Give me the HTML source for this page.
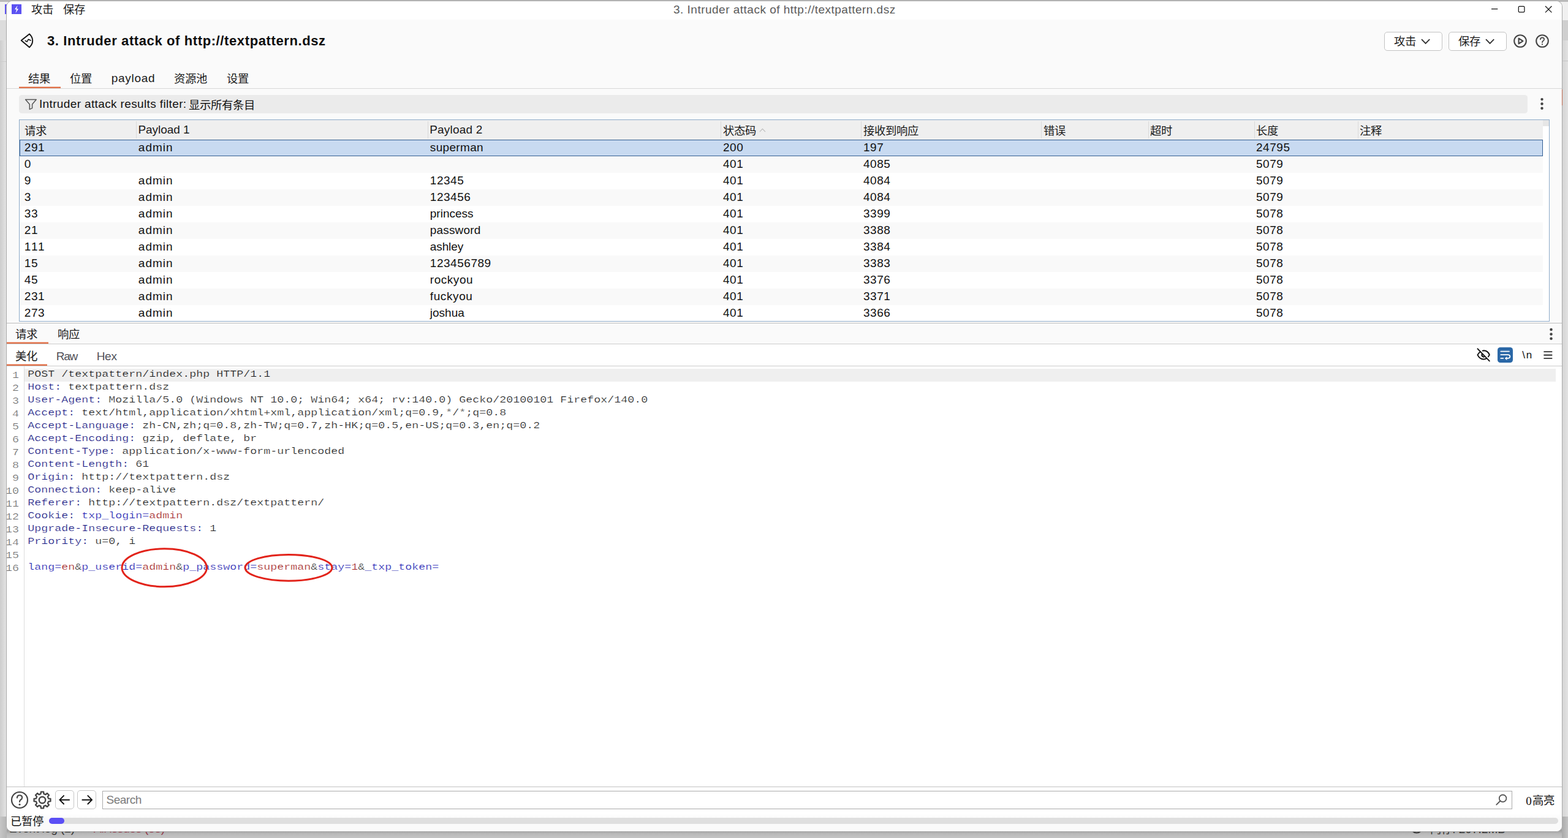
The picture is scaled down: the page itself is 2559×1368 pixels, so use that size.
<!DOCTYPE html>
<html><head><meta charset="utf-8"><title>Intruder attack</title>
<style>
html,body{margin:0;padding:0}
body{width:2559px;height:1368px;position:relative;overflow:hidden;background:#e9e9e9;font-family:"Liberation Sans",sans-serif;font-kerning:none;}
.a{position:absolute;box-sizing:border-box;overflow:visible}
.t{position:absolute;white-space:pre;line-height:24px;height:24px;font-kerning:none;font-variant-ligatures:none}
.m{font-family:"Liberation Mono",monospace;font-size:18.333px;transform:scaleY(0.82);transform-origin:0 16.89px;-webkit-text-stroke:0.3px #fff}.m.h{-webkit-text-stroke-color:#efefef}.u{-webkit-text-stroke:0}
.cj{font-family:"Liberation Sans","Noto Sans CJK SC",sans-serif;font-size:1000px;font-kerning:none}
#win{position:absolute;left:10px;top:1px;width:2540px;height:1357px;box-sizing:border-box;border:1px solid #a9a9a9;border-radius:10px;overflow:hidden;background:#fafafa}
#in{position:absolute;left:-11px;top:-2px;width:2559px;height:1368px}
</style></head><body>

<div class="a" style="left:0;top:0;width:2559px;height:1368px;background:#e6e6e6"></div>
<div class="a" style="left:0;top:0;width:14px;height:1368px;background:linear-gradient(90deg,#cdcdcd,#ececec)"></div>
<div class="a" style="left:0;top:0;width:14px;height:33px;background:#f1f1f1"></div>
<div class="a" style="left:0;top:33px;width:14px;height:33px;background:#dcdcdc"></div>
<div class="a" style="left:8px;top:7px;width:4px;height:16px;background:#5c52f0"></div>
<div class="a" style="left:2545px;top:0;width:14px;height:1368px;background:linear-gradient(90deg,#b8b8b8,#d6d6d6 40%,#e2e2e2)"></div>
<div class="a" style="left:2545px;top:0;width:14px;height:33px;background:#f0f0f0"></div>
<div class="a" style="left:2545px;top:33px;width:14px;height:33px;background:#cfcfcf"></div>
<div class="a" style="left:2545px;top:99px;width:14px;height:1px;background:#c4c4c4"></div>
<div class="a" style="left:0;top:100px;width:14px;height:1px;background:#cccccc"></div>
<div class="a" style="left:0;top:0;width:2559px;height:3px;background:#b9b9b9"></div>
<div class="a" style="left:0;top:1333px;width:2559px;height:35px;background:#c2c2c2"></div>
<div class="a" style="left:0;top:1333px;width:14px;height:1px;background:#a8a8a8"></div>
<div class="a" style="left:2545px;top:1333px;width:14px;height:1px;background:#a8a8a8"></div>
<div class="a" style="left:0;top:1354px;width:2559px;height:14px;background:linear-gradient(#9c9c9c 0,#a4a4a4 3px,#b9b9b9 7px,#c2c2c2 12px)"></div>
<div class="a" style="left:0;top:1333px;width:11px;height:35px;background:linear-gradient(90deg,#c6c6c6,#b4b4b4)"></div>
<div class="a" style="left:2549px;top:1333px;width:10px;height:35px;background:linear-gradient(90deg,#a9a9a9,#c4c4c4)"></div>
<div class="t" style="left:15.04px;top:1341.42px;font-size:19px;color:#333;font-family:'Liberation Sans',sans-serif;letter-spacing:-0.049px;">Event log (2)</div><div class="t" style="left:152.96px;top:1341.42px;font-size:19px;color:#93394a;font-family:'Liberation Sans',sans-serif;letter-spacing:-0.221px;">All issues (33)</div><svg class="a" style="left:2300px;top:1337.5px;" width="24" height="24" viewBox="0 0 24 24"><circle cx="12" cy="12" r="9.6" fill="none" stroke="#333" stroke-width="2"/></svg><svg class="a" role="img" aria-label="内存" style="left:2333.61px;top:1343.97px" width="36.40" height="18.4" viewBox="0 0 1978 1000" fill="#333"><text class="cj" x="0" y="880" textLength="1978" lengthAdjust="spacing">内存</text></svg><div class="t" style="left:2370.27px;top:1341.62px;font-size:19px;color:#333;font-family:'Liberation Sans',sans-serif;letter-spacing:0.017px;">: 297.2MB</div>
<div id="win"><div id="in">
<div class="a" style="left:11px;top:2px;width:2538px;height:30px;background:#ffffff;"></div><svg class="a" style="left:19px;top:7px;" width="16" height="16" viewBox="0 0 16 16"><rect width="16" height="16" fill="#5c52f2"/><path d="M9.7 1.7 L5.0 8.3 L8.0 8.6 L6.4 14.4 L11.1 7.6 L8.0 7.3 Z" fill="#fff"/></svg><svg class="a" role="img" aria-label="攻击" style="left:51.11px;top:6.27px" width="36.40" height="18.4" viewBox="0 0 1978 1000" fill="#1a1a1a"><text class="cj" x="0" y="880" textLength="1978" lengthAdjust="spacing">攻击</text></svg><svg class="a" role="img" aria-label="保存" style="left:103.31px;top:6.27px" width="36.40" height="18.4" viewBox="0 0 1978 1000" fill="#1a1a1a"><text class="cj" x="0" y="880" textLength="1978" lengthAdjust="spacing">保存</text></svg><svg class="a" style="left:1097.28px;top:-0.25px" width="370.2" height="30.4"><text x="2" y="21.85" textLength="362.17" lengthAdjust="spacing" style="font-family:'Liberation Sans',sans-serif;font-size:19px;fill:#5b5b5b;font-kerning:none">3. Intruder attack of http://textpattern.dsz</text></svg><svg class="a" style="left:2428px;top:4px;" width="112" height="24" viewBox="0 0 112 24"><g fill="none" stroke="#111" stroke-width="1.25"><path d="M6 10.6h10.3"/><rect x="50.3" y="6.3" width="9.6" height="9.6" rx="1.6"/><path d="M94 6l10.4 10.4M104.4 6L94 16.4"/></g></svg><svg class="a" style="left:32px;top:53px;" width="24" height="27" viewBox="0 0 24 27"><g fill="none" stroke="#111" stroke-width="1.9" stroke-linejoin="round" stroke-linecap="round"><path d="M2.7 13.1 L16.0 2.5 Q21.3 7.4 21.2 13.6 Q21.1 19.6 16.0 24.2 Z"/><path d="M9.2 13.5 L12.1 15.1 L14.3 11.2 L18.2 13.0" stroke-width="1.5"/></g></svg><svg class="a" style="left:74.90px;top:48.50px" width="462.1" height="35.2"><text x="2" y="25.30" textLength="454.10" lengthAdjust="spacing" style="font-family:'Liberation Sans',sans-serif;font-size:22px;font-weight:bold;fill:#0d0d0d;font-kerning:none">3. Intruder attack of http://textpattern.dsz</text></svg><div class="a" style="left:2259px;top:52px;width:95px;height:30.5px;background:#fff;border:1px solid #c3c3c3;border-radius:5px;"></div><div class="a" style="left:2364px;top:52px;width:95px;height:30.5px;background:#fff;border:1px solid #c3c3c3;border-radius:5px;"></div><svg class="a" role="img" aria-label="攻击" style="left:2274.61px;top:57.57px" width="36.40" height="18.4" viewBox="0 0 1978 1000" fill="#1a1a1a"><text class="cj" x="0" y="880" textLength="1978" lengthAdjust="spacing">攻击</text></svg><svg class="a" role="img" aria-label="保存" style="left:2379.61px;top:57.57px" width="36.40" height="18.4" viewBox="0 0 1978 1000" fill="#1a1a1a"><text class="cj" x="0" y="880" textLength="1978" lengthAdjust="spacing">保存</text></svg><svg class="a" style="left:2319.3px;top:63px;" width="16" height="10" viewBox="0 0 16 10"><path d="M1 1.2 L7.6 7.8 L14.2 1.2" fill="none" stroke="#333" stroke-width="1.9"/></svg><svg class="a" style="left:2424.2px;top:63px;" width="16" height="10" viewBox="0 0 16 10"><path d="M1 1.2 L7.6 7.8 L14.2 1.2" fill="none" stroke="#333" stroke-width="1.9"/></svg><svg class="a" style="left:2469px;top:55px;" width="24" height="24" viewBox="0 0 24 24"><g fill="none" stroke="#444" stroke-width="2.1" stroke-linejoin="round"><circle cx="12" cy="12" r="9.8"/><path d="M9.6 7.6 L16.4 12 L9.6 16.4 Z"/></g></svg><svg class="a" style="left:2504.7px;top:55px;" width="24" height="24" viewBox="0 0 24 24"><g fill="none" stroke="#444" stroke-width="2.1" stroke-linecap="round"><circle cx="12" cy="12" r="9.8"/><path d="M8.9 9.4 Q9 6.3 12 6.3 Q15.1 6.3 15.1 9 Q15.1 10.8 13.4 11.7 Q12 12.5 12 14.2" stroke-width="1.7"/></g><circle cx="12" cy="17.3" r="1.15" fill="#444"/></svg><svg class="a" role="img" aria-label="结果" style="left:45.61px;top:119.27px" width="36.40" height="18.4" viewBox="0 0 1978 1000" fill="#1a1a1a"><text class="cj" x="0" y="880" textLength="1978" lengthAdjust="spacing">结果</text></svg><svg class="a" role="img" aria-label="位置" style="left:114.01px;top:119.27px" width="36.40" height="18.4" viewBox="0 0 1978 1000" fill="#1a1a1a"><text class="cj" x="0" y="880" textLength="1978" lengthAdjust="spacing">位置</text></svg><div class="t" style="left:181.68px;top:116.12px;font-size:19px;color:#1a1a1a;font-family:'Liberation Sans',sans-serif;letter-spacing:0.732px;">payload</div><svg class="a" role="img" aria-label="资源池" style="left:284.31px;top:119.27px" width="54.40" height="18.4" viewBox="0 0 2957 1000" fill="#1a1a1a"><text class="cj" x="0" y="880" textLength="2957" lengthAdjust="spacing">资源池</text></svg><svg class="a" role="img" aria-label="设置" style="left:370.11px;top:119.27px" width="36.40" height="18.4" viewBox="0 0 1978 1000" fill="#1a1a1a"><text class="cj" x="0" y="880" textLength="1978" lengthAdjust="spacing">设置</text></svg><div class="a" style="left:11px;top:144px;width:2538px;height:1px;background:#d7d7d7;"></div><div class="a" style="left:31px;top:141px;width:68px;height:1px;background:#f2c9b9;"></div><div class="a" style="left:31px;top:142px;width:68px;height:2px;background:#e07048;"></div><div class="a" style="left:31px;top:155px;width:2462px;height:30px;background:#ebebeb;border-radius:4.5px;"></div><svg class="a" style="left:40px;top:160px;" width="21" height="20" viewBox="0 0 21 20"><path d="M1.6 2.4 H19.2 L12.6 10.3 V16.6 L8.3 18.4 V10.3 Z" fill="none" stroke="#555" stroke-width="1.5" stroke-linejoin="round"/></svg><div class="t" style="left:63.95px;top:158.32px;font-size:19px;color:#111;font-family:'Liberation Sans',sans-serif;letter-spacing:0.368px;">Intruder attack results filter:</div><svg class="a" role="img" aria-label="显示所有条目" style="left:308.21px;top:161.77px" width="108.40" height="18.4" viewBox="0 0 5891 1000" fill="#111"><text class="cj" x="0" y="880" textLength="5891" lengthAdjust="spacing">显示所有条目</text></svg><svg class="a" style="left:2510px;top:155px;" width="14" height="30" viewBox="0 0 14 30"><g fill="#444"><circle cx="6.5" cy="7.1" r="2.2"/><circle cx="6.5" cy="14.5" r="2.2"/><circle cx="6.5" cy="21.8" r="2.2"/></g></svg><div class="a" style="left:31px;top:195px;width:2498px;height:330px;background:#ffffff;border:1px solid #8eabc9;"></div><div class="a" style="left:32px;top:196px;width:2486px;height:31.5px;background:#efefef;"></div><div class="a" style="left:2518px;top:196px;width:10px;height:10px;background:#e6e6e6;"></div><div class="a" style="left:222px;top:198px;width:1px;height:28px;background:#dadada;"></div><div class="a" style="left:698px;top:198px;width:1px;height:28px;background:#dadada;"></div><div class="a" style="left:1176px;top:198px;width:1px;height:28px;background:#dadada;"></div><div class="a" style="left:1405px;top:198px;width:1px;height:28px;background:#dadada;"></div><div class="a" style="left:1699px;top:198px;width:1px;height:28px;background:#dadada;"></div><div class="a" style="left:1873.5px;top:198px;width:1px;height:28px;background:#dadada;"></div><div class="a" style="left:2046.5px;top:198px;width:1px;height:28px;background:#dadada;"></div><div class="a" style="left:2216px;top:198px;width:1px;height:28px;background:#dadada;"></div><svg class="a" role="img" aria-label="请求" style="left:39.61px;top:203.97px" width="36.40" height="18.4" viewBox="0 0 1978 1000" fill="#1a1a1a"><text class="cj" x="0" y="880" textLength="1978" lengthAdjust="spacing">请求</text></svg><div class="t" style="left:225.44px;top:200.12px;font-size:19px;color:#1a1a1a;font-family:'Liberation Sans',sans-serif;letter-spacing:-0.053px;">Payload 1</div><div class="t" style="left:701.14px;top:200.12px;font-size:19px;color:#1a1a1a;font-family:'Liberation Sans',sans-serif;letter-spacing:0.201px;">Payload 2</div><svg class="a" role="img" aria-label="状态码" style="left:1180.21px;top:203.97px" width="54.40" height="18.4" viewBox="0 0 2957 1000" fill="#1a1a1a"><text class="cj" x="0" y="880" textLength="2957" lengthAdjust="spacing">状态码</text></svg><svg class="a" style="left:1238.5px;top:208.5px;" width="11" height="8" viewBox="0 0 11 8"><path d="M0.8 6.2 L5.4 1.4 L10 6.2" fill="none" stroke="#bdbdbd" stroke-width="1.2"/></svg><svg class="a" role="img" aria-label="接收到响应" style="left:1409.11px;top:203.97px" width="90.40" height="18.4" viewBox="0 0 4913 1000" fill="#1a1a1a"><text class="cj" x="0" y="880" textLength="4913" lengthAdjust="spacing">接收到响应</text></svg><svg class="a" role="img" aria-label="错误" style="left:1703.01px;top:203.97px" width="36.40" height="18.4" viewBox="0 0 1978 1000" fill="#1a1a1a"><text class="cj" x="0" y="880" textLength="1978" lengthAdjust="spacing">错误</text></svg><svg class="a" role="img" aria-label="超时" style="left:1876.81px;top:203.97px" width="36.40" height="18.4" viewBox="0 0 1978 1000" fill="#1a1a1a"><text class="cj" x="0" y="880" textLength="1978" lengthAdjust="spacing">超时</text></svg><svg class="a" role="img" aria-label="长度" style="left:2049.61px;top:203.97px" width="36.40" height="18.4" viewBox="0 0 1978 1000" fill="#1a1a1a"><text class="cj" x="0" y="880" textLength="1978" lengthAdjust="spacing">长度</text></svg><svg class="a" role="img" aria-label="注释" style="left:2219.21px;top:203.97px" width="36.40" height="18.4" viewBox="0 0 1978 1000" fill="#1a1a1a"><text class="cj" x="0" y="880" textLength="1978" lengthAdjust="spacing">注释</text></svg><div class="a" style="left:32px;top:228px;width:2486px;height:27px;background:#c8daf1;border:1px solid #345f93;"></div><div class="t" style="left:39.80px;top:229.02px;font-size:19px;color:#111;font-family:'Liberation Sans',sans-serif;letter-spacing:0.530px;">291</div><div class="t" style="left:225.80px;top:229.02px;font-size:19px;color:#111;font-family:'Liberation Sans',sans-serif;letter-spacing:1.021px;">admin</div><div class="t" style="left:701.80px;top:229.02px;font-size:19px;color:#111;font-family:'Liberation Sans',sans-serif;letter-spacing:0.335px;">superman</div><div class="t" style="left:1180.00px;top:229.02px;font-size:19px;color:#111;font-family:'Liberation Sans',sans-serif;letter-spacing:0.530px;">200</div><div class="t" style="left:1409.00px;top:229.02px;font-size:19px;color:#111;font-family:'Liberation Sans',sans-serif;letter-spacing:0.530px;">197</div><div class="t" style="left:2050.00px;top:229.02px;font-size:19px;color:#111;font-family:'Liberation Sans',sans-serif;letter-spacing:0.530px;">24795</div><div class="a" style="left:32px;top:255px;width:2486px;height:27px;background:#f9f9f9;"></div><div class="t" style="left:39.80px;top:256.02px;font-size:19px;color:#111;font-family:'Liberation Sans',sans-serif;letter-spacing:0.530px;">0</div><div class="t" style="left:1180.00px;top:256.02px;font-size:19px;color:#111;font-family:'Liberation Sans',sans-serif;letter-spacing:0.530px;">401</div><div class="t" style="left:1409.00px;top:256.02px;font-size:19px;color:#111;font-family:'Liberation Sans',sans-serif;letter-spacing:0.530px;">4085</div><div class="t" style="left:2050.00px;top:256.02px;font-size:19px;color:#111;font-family:'Liberation Sans',sans-serif;letter-spacing:0.530px;">5079</div><div class="a" style="left:32px;top:282px;width:2486px;height:27px;background:#ffffff;"></div><div class="t" style="left:39.80px;top:283.02px;font-size:19px;color:#111;font-family:'Liberation Sans',sans-serif;letter-spacing:0.530px;">9</div><div class="t" style="left:225.80px;top:283.02px;font-size:19px;color:#111;font-family:'Liberation Sans',sans-serif;letter-spacing:1.021px;">admin</div><div class="t" style="left:701.80px;top:283.02px;font-size:19px;color:#111;font-family:'Liberation Sans',sans-serif;letter-spacing:0.530px;">12345</div><div class="t" style="left:1180.00px;top:283.02px;font-size:19px;color:#111;font-family:'Liberation Sans',sans-serif;letter-spacing:0.530px;">401</div><div class="t" style="left:1409.00px;top:283.02px;font-size:19px;color:#111;font-family:'Liberation Sans',sans-serif;letter-spacing:0.530px;">4084</div><div class="t" style="left:2050.00px;top:283.02px;font-size:19px;color:#111;font-family:'Liberation Sans',sans-serif;letter-spacing:0.530px;">5079</div><div class="a" style="left:32px;top:309px;width:2486px;height:27px;background:#f9f9f9;"></div><div class="t" style="left:39.80px;top:310.02px;font-size:19px;color:#111;font-family:'Liberation Sans',sans-serif;letter-spacing:0.530px;">3</div><div class="t" style="left:225.80px;top:310.02px;font-size:19px;color:#111;font-family:'Liberation Sans',sans-serif;letter-spacing:1.021px;">admin</div><div class="t" style="left:701.80px;top:310.02px;font-size:19px;color:#111;font-family:'Liberation Sans',sans-serif;letter-spacing:0.530px;">123456</div><div class="t" style="left:1180.00px;top:310.02px;font-size:19px;color:#111;font-family:'Liberation Sans',sans-serif;letter-spacing:0.530px;">401</div><div class="t" style="left:1409.00px;top:310.02px;font-size:19px;color:#111;font-family:'Liberation Sans',sans-serif;letter-spacing:0.530px;">4084</div><div class="t" style="left:2050.00px;top:310.02px;font-size:19px;color:#111;font-family:'Liberation Sans',sans-serif;letter-spacing:0.530px;">5079</div><div class="a" style="left:32px;top:336px;width:2486px;height:27px;background:#ffffff;"></div><div class="t" style="left:39.80px;top:337.02px;font-size:19px;color:#111;font-family:'Liberation Sans',sans-serif;letter-spacing:0.530px;">33</div><div class="t" style="left:225.80px;top:337.02px;font-size:19px;color:#111;font-family:'Liberation Sans',sans-serif;letter-spacing:1.021px;">admin</div><div class="t" style="left:701.80px;top:337.02px;font-size:19px;color:#111;font-family:'Liberation Sans',sans-serif;letter-spacing:0.005px;">princess</div><div class="t" style="left:1180.00px;top:337.02px;font-size:19px;color:#111;font-family:'Liberation Sans',sans-serif;letter-spacing:0.530px;">401</div><div class="t" style="left:1409.00px;top:337.02px;font-size:19px;color:#111;font-family:'Liberation Sans',sans-serif;letter-spacing:0.530px;">3399</div><div class="t" style="left:2050.00px;top:337.02px;font-size:19px;color:#111;font-family:'Liberation Sans',sans-serif;letter-spacing:0.530px;">5078</div><div class="a" style="left:32px;top:363px;width:2486px;height:27px;background:#f9f9f9;"></div><div class="t" style="left:39.80px;top:364.02px;font-size:19px;color:#111;font-family:'Liberation Sans',sans-serif;letter-spacing:0.530px;">21</div><div class="t" style="left:225.80px;top:364.02px;font-size:19px;color:#111;font-family:'Liberation Sans',sans-serif;letter-spacing:1.021px;">admin</div><div class="t" style="left:701.80px;top:364.02px;font-size:19px;color:#111;font-family:'Liberation Sans',sans-serif;letter-spacing:0.158px;">password</div><div class="t" style="left:1180.00px;top:364.02px;font-size:19px;color:#111;font-family:'Liberation Sans',sans-serif;letter-spacing:0.530px;">401</div><div class="t" style="left:1409.00px;top:364.02px;font-size:19px;color:#111;font-family:'Liberation Sans',sans-serif;letter-spacing:0.530px;">3388</div><div class="t" style="left:2050.00px;top:364.02px;font-size:19px;color:#111;font-family:'Liberation Sans',sans-serif;letter-spacing:0.530px;">5078</div><div class="a" style="left:32px;top:390px;width:2486px;height:27px;background:#ffffff;"></div><div class="t" style="left:39.80px;top:391.02px;font-size:19px;color:#111;font-family:'Liberation Sans',sans-serif;letter-spacing:0.530px;">111</div><div class="t" style="left:225.80px;top:391.02px;font-size:19px;color:#111;font-family:'Liberation Sans',sans-serif;letter-spacing:1.021px;">admin</div><div class="t" style="left:701.80px;top:391.02px;font-size:19px;color:#111;font-family:'Liberation Sans',sans-serif;letter-spacing:-0.117px;">ashley</div><div class="t" style="left:1180.00px;top:391.02px;font-size:19px;color:#111;font-family:'Liberation Sans',sans-serif;letter-spacing:0.530px;">401</div><div class="t" style="left:1409.00px;top:391.02px;font-size:19px;color:#111;font-family:'Liberation Sans',sans-serif;letter-spacing:0.530px;">3384</div><div class="t" style="left:2050.00px;top:391.02px;font-size:19px;color:#111;font-family:'Liberation Sans',sans-serif;letter-spacing:0.530px;">5078</div><div class="a" style="left:32px;top:417px;width:2486px;height:27px;background:#f9f9f9;"></div><div class="t" style="left:39.80px;top:418.02px;font-size:19px;color:#111;font-family:'Liberation Sans',sans-serif;letter-spacing:0.530px;">15</div><div class="t" style="left:225.80px;top:418.02px;font-size:19px;color:#111;font-family:'Liberation Sans',sans-serif;letter-spacing:1.021px;">admin</div><div class="t" style="left:701.80px;top:418.02px;font-size:19px;color:#111;font-family:'Liberation Sans',sans-serif;letter-spacing:0.530px;">123456789</div><div class="t" style="left:1180.00px;top:418.02px;font-size:19px;color:#111;font-family:'Liberation Sans',sans-serif;letter-spacing:0.530px;">401</div><div class="t" style="left:1409.00px;top:418.02px;font-size:19px;color:#111;font-family:'Liberation Sans',sans-serif;letter-spacing:0.530px;">3383</div><div class="t" style="left:2050.00px;top:418.02px;font-size:19px;color:#111;font-family:'Liberation Sans',sans-serif;letter-spacing:0.530px;">5078</div><div class="a" style="left:32px;top:444px;width:2486px;height:27px;background:#ffffff;"></div><div class="t" style="left:39.80px;top:445.02px;font-size:19px;color:#111;font-family:'Liberation Sans',sans-serif;letter-spacing:0.530px;">45</div><div class="t" style="left:225.80px;top:445.02px;font-size:19px;color:#111;font-family:'Liberation Sans',sans-serif;letter-spacing:1.021px;">admin</div><div class="t" style="left:701.80px;top:445.02px;font-size:19px;color:#111;font-family:'Liberation Sans',sans-serif;letter-spacing:0.539px;">rockyou</div><div class="t" style="left:1180.00px;top:445.02px;font-size:19px;color:#111;font-family:'Liberation Sans',sans-serif;letter-spacing:0.530px;">401</div><div class="t" style="left:1409.00px;top:445.02px;font-size:19px;color:#111;font-family:'Liberation Sans',sans-serif;letter-spacing:0.530px;">3376</div><div class="t" style="left:2050.00px;top:445.02px;font-size:19px;color:#111;font-family:'Liberation Sans',sans-serif;letter-spacing:0.530px;">5078</div><div class="a" style="left:32px;top:471px;width:2486px;height:27px;background:#f9f9f9;"></div><div class="t" style="left:39.80px;top:472.02px;font-size:19px;color:#111;font-family:'Liberation Sans',sans-serif;letter-spacing:0.530px;">231</div><div class="t" style="left:225.80px;top:472.02px;font-size:19px;color:#111;font-family:'Liberation Sans',sans-serif;letter-spacing:1.021px;">admin</div><div class="t" style="left:701.80px;top:472.02px;font-size:19px;color:#111;font-family:'Liberation Sans',sans-serif;letter-spacing:0.597px;">fuckyou</div><div class="t" style="left:1180.00px;top:472.02px;font-size:19px;color:#111;font-family:'Liberation Sans',sans-serif;letter-spacing:0.530px;">401</div><div class="t" style="left:1409.00px;top:472.02px;font-size:19px;color:#111;font-family:'Liberation Sans',sans-serif;letter-spacing:0.530px;">3371</div><div class="t" style="left:2050.00px;top:472.02px;font-size:19px;color:#111;font-family:'Liberation Sans',sans-serif;letter-spacing:0.530px;">5078</div><div class="a" style="left:32px;top:498px;width:2486px;height:26px;background:#ffffff;"></div><div class="t" style="left:39.80px;top:499.02px;font-size:19px;color:#111;font-family:'Liberation Sans',sans-serif;letter-spacing:0.530px;">273</div><div class="t" style="left:225.80px;top:499.02px;font-size:19px;color:#111;font-family:'Liberation Sans',sans-serif;letter-spacing:1.021px;">admin</div><div class="t" style="left:701.80px;top:499.02px;font-size:19px;color:#111;font-family:'Liberation Sans',sans-serif;">joshua</div><div class="t" style="left:1180.00px;top:499.02px;font-size:19px;color:#111;font-family:'Liberation Sans',sans-serif;letter-spacing:0.530px;">401</div><div class="t" style="left:1409.00px;top:499.02px;font-size:19px;color:#111;font-family:'Liberation Sans',sans-serif;letter-spacing:0.530px;">3366</div><div class="t" style="left:2050.00px;top:499.02px;font-size:19px;color:#111;font-family:'Liberation Sans',sans-serif;letter-spacing:0.530px;">5078</div><div class="a" style="left:11px;top:527px;width:2538px;height:1px;background:#bdbdbd;"></div><div class="a" style="left:11px;top:528px;width:2538px;height:33px;background:#fafafa;"></div><svg class="a" role="img" aria-label="请求" style="left:25.41px;top:536.47px" width="36.40" height="18.4" viewBox="0 0 1978 1000" fill="#1a1a1a"><text class="cj" x="0" y="880" textLength="1978" lengthAdjust="spacing">请求</text></svg><svg class="a" role="img" aria-label="响应" style="left:93.61px;top:536.47px" width="36.40" height="18.4" viewBox="0 0 1978 1000" fill="#1a1a1a"><text class="cj" x="0" y="880" textLength="1978" lengthAdjust="spacing">响应</text></svg><div class="a" style="left:11px;top:561px;width:2538px;height:1px;background:#cbcbcb;"></div><div class="a" style="left:11px;top:558px;width:67.8px;height:1px;background:#f2c3b1;"></div><div class="a" style="left:11px;top:559px;width:67.8px;height:2px;background:#e07048;"></div><svg class="a" style="left:2525px;top:530px;" width="14" height="30" viewBox="0 0 14 30"><g fill="#444"><circle cx="6.5" cy="8" r="2.25"/><circle cx="6.5" cy="15.5" r="2.25"/><circle cx="6.5" cy="22.8" r="2.25"/></g></svg><div class="a" style="left:11px;top:562px;width:2538px;height:35px;background:#ffffff;"></div><svg class="a" role="img" aria-label="美化" style="left:25.31px;top:571.97px" width="36.40" height="18.4" viewBox="0 0 1978 1000" fill="#1a1a1a"><text class="cj" x="0" y="880" textLength="1978" lengthAdjust="spacing">美化</text></svg><div class="t" style="left:91.84px;top:569.62px;font-size:19px;color:#4f5058;font-family:'Liberation Sans',sans-serif;letter-spacing:-1.249px;">Raw</div><div class="t" style="left:157.64px;top:569.62px;font-size:19px;color:#4f5058;font-family:'Liberation Sans',sans-serif;letter-spacing:-0.263px;">Hex</div><div class="a" style="left:11px;top:597px;width:2538px;height:1px;background:#cbcbcb;"></div><div class="a" style="left:11px;top:594px;width:65.8px;height:1px;background:#f2c3b1;"></div><div class="a" style="left:11px;top:595px;width:65.8px;height:2px;background:#e07048;"></div><svg class="a" style="left:2409px;top:566px;" width="25" height="26" viewBox="0 0 25 26"><g fill="none" stroke="#111" stroke-width="1.9" stroke-linecap="round"><path d="M6.4 8.8 Q3.4 10.8 2.5 13.4 Q5.6 20.4 12.4 20.5 Q14.9 20.4 16.9 19.1"/><path d="M10.5 6.6 Q11.6 6.3 12.6 6.3 Q19.3 6.6 21.8 13.2 Q21.1 15.0 19.8 16.3"/><path d="M9.6 12.0 Q8.6 15.9 12.7 16.6" stroke-width="2.2"/><path d="M2.5 3.3 L21.8 23.4"/></g></svg><svg class="a" style="left:2444px;top:567px;" width="25" height="25" viewBox="0 0 25 25"><rect width="25" height="25" rx="4.5" fill="#2b68a7"/><g fill="none" stroke="#fff" stroke-width="1.7" stroke-linecap="round"><path d="M5.3 6.6 H19"/><path d="M5.3 12.1 H16.8 Q20.4 12.2 20.4 15.0 Q20.4 17.8 16.8 17.9 H13.6"/><path d="M5.3 17.9 H9.3"/></g><path d="M15.4 14.9 L11.8 17.9 L15.4 20.9 Z" fill="#fff"/></svg><div class="t" style="left:2484.30px;top:567.81px;font-size:17px;color:#111;font-family:'Liberation Sans',sans-serif;letter-spacing:1.626px;">\n</div><svg class="a" style="left:2518px;top:570px;" width="18" height="20" viewBox="0 0 18 20"><path d="M1.4 4.3h13.9M1.4 9.6h13.9M1.4 15h13.9" stroke="#111" stroke-width="1.6" fill="none"/></svg><div class="a" style="left:11px;top:598px;width:2538px;height:686.5px;background:#ffffff;"></div><div class="a" style="left:39px;top:598px;width:1px;height:686.5px;background:#dcdcdc;"></div><div class="a" style="left:40px;top:602px;width:2499px;height:21px;background:#efefef;"></div><div class="t m h" style="left:45.3px;top:599.41px"><span style="color:#111">POST /textpattern/index.php HTTP/1.1</span></div><div class="t m" style="left:20.00px;top:600.56px;color:#6a6a6a">1</div><div class="t m" style="left:45.3px;top:620.41px"><span style="color:#141480">Host:</span><span style="color:#1a1a1a"> textpattern.dsz</span></div><div class="t m" style="left:20.00px;top:621.56px;color:#6a6a6a">2</div><div class="t m" style="left:45.3px;top:641.41px"><span style="color:#141480">User-Agent:</span><span style="color:#1a1a1a"> Mozilla/5.0 (Windows NT 10.0; Win64; x64; rv:140.0) Gecko/20100101 Firefox/140.0</span></div><div class="t m" style="left:20.00px;top:642.56px;color:#6a6a6a">3</div><div class="t m" style="left:45.3px;top:662.41px"><span style="color:#141480">Accept:</span><span style="color:#1a1a1a"> text/html,application/xhtml+xml,application/xml;q=0.9,*/*;q=0.8</span></div><div class="t m" style="left:20.00px;top:663.56px;color:#6a6a6a">4</div><div class="t m" style="left:45.3px;top:683.41px"><span style="color:#141480">Accept-Language:</span><span style="color:#1a1a1a"> zh-CN,zh;q=0.8,zh-TW;q=0.7,zh-HK;q=0.5,en-US;q=0.3,en;q=0.2</span></div><div class="t m" style="left:20.00px;top:684.56px;color:#6a6a6a">5</div><div class="t m" style="left:45.3px;top:704.41px"><span style="color:#141480">Accept-Encoding:</span><span style="color:#1a1a1a"> gzip, deflate, br</span></div><div class="t m" style="left:20.00px;top:705.56px;color:#6a6a6a">6</div><div class="t m" style="left:45.3px;top:725.41px"><span style="color:#141480">Content-Type:</span><span style="color:#1a1a1a"> application/x-www-form-urlencoded</span></div><div class="t m" style="left:20.00px;top:726.56px;color:#6a6a6a">7</div><div class="t m" style="left:45.3px;top:746.41px"><span style="color:#141480">Content-Length:</span><span style="color:#1a1a1a"> 61</span></div><div class="t m" style="left:20.00px;top:747.56px;color:#6a6a6a">8</div><div class="t m" style="left:45.3px;top:767.41px"><span style="color:#141480">Origin:</span><span style="color:#1a1a1a"> http://textpattern.dsz</span></div><div class="t m" style="left:20.00px;top:768.56px;color:#6a6a6a">9</div><div class="t m" style="left:45.3px;top:788.41px"><span style="color:#141480">Connection:</span><span style="color:#1a1a1a"> keep-alive</span></div><div class="t m" style="left:9.00px;top:789.56px;color:#6a6a6a">10</div><div class="t m" style="left:45.3px;top:809.41px"><span style="color:#141480">Referer:</span><span style="color:#1a1a1a"> http://textpattern.dsz/textpattern/</span></div><div class="t m" style="left:9.00px;top:810.56px;color:#6a6a6a">11</div><div class="t m" style="left:45.3px;top:830.41px"><span style="color:#141480">Cookie:</span><span style="color:#1a1ab0"> txp<span class="u">_</span>login=</span><span style="color:#a02020">admin</span></div><div class="t m" style="left:9.00px;top:831.56px;color:#6a6a6a">12</div><div class="t m" style="left:45.3px;top:851.41px"><span style="color:#141480">Upgrade-Insecure-Requests:</span><span style="color:#1a1a1a"> 1</span></div><div class="t m" style="left:9.00px;top:852.56px;color:#6a6a6a">13</div><div class="t m" style="left:45.3px;top:872.41px"><span style="color:#141480">Priority:</span><span style="color:#1a1a1a"> u=0, i</span></div><div class="t m" style="left:9.00px;top:873.56px;color:#6a6a6a">14</div><div class="t m" style="left:9.00px;top:894.56px;color:#6a6a6a">15</div><div class="t m" style="left:45.3px;top:914.41px"><span style="color:#1a1ab0">lang=</span><span style="color:#a02020">en</span><span style="color:#333">&amp;</span><span style="color:#1a1ab0">p<span class="u">_</span>userid=</span><span style="color:#a02020">admin</span><span style="color:#333">&amp;</span><span style="color:#1a1ab0">p<span class="u">_</span>password=</span><span style="color:#a02020">superman</span><span style="color:#333">&amp;</span><span style="color:#1a1ab0">stay=</span><span style="color:#a02020">1</span><span style="color:#333">&amp;</span><span style="color:#1a1ab0"><span class="u">_</span>txp<span class="u">_</span>token=</span></div><div class="t m" style="left:9.00px;top:915.56px;color:#6a6a6a">16</div><svg class="a" style="left:190px;top:885px;" width="370" height="85" viewBox="0 0 370 85"><g fill="none" stroke="#e2231a" stroke-width="3"><ellipse cx="78.2" cy="41.8" rx="69.2" ry="31"/><ellipse cx="281" cy="41.8" rx="70.9" ry="21.4"/></g></svg><div class="a" style="left:11px;top:1284.3px;width:2538px;height:1px;background:#c2c2c2;"></div><div class="a" style="left:11px;top:1285.3px;width:2538px;height:73px;background:linear-gradient(#fff 0,#fff 42px,#fafafa 52px);"></div><svg class="a" style="left:16px;top:1290px;" width="32" height="32" viewBox="0 0 32 32"><g fill="none" stroke="#454545" stroke-width="2.2" stroke-linecap="round"><circle cx="16" cy="16" r="13"/><path d="M11.9 12.4 Q12 8.3 16 8.3 Q20.1 8.3 20.1 11.9 Q20.1 14.2 17.9 15.5 Q16 16.6 16 19" stroke-width="2.1"/></g><circle cx="16" cy="23.2" r="1.5" fill="#454545"/></svg><svg class="a" style="left:53px;top:1290px;" width="32" height="32" viewBox="0 0 32 32"><g fill="none" stroke="#454545" stroke-width="2.3" stroke-linejoin="round"><path d="M13.87 2.57 L18.13 2.57 L18.43 5.89 L21.43 7.13 L23.99 5.00 L27.00 8.01 L24.87 10.57 L26.11 13.57 L29.43 13.87 L29.43 18.13 L26.11 18.43 L24.87 21.43 L27.00 23.99 L23.99 27.00 L21.43 24.87 L18.43 26.11 L18.13 29.43 L13.87 29.43 L13.57 26.11 L10.57 24.87 L8.01 27.00 L5.00 23.99 L7.13 21.43 L5.89 18.43 L2.57 18.13 L2.57 13.87 L5.89 13.57 L7.13 10.57 L5.00 8.01 L8.01 5.00 L10.57 7.13 L13.57 5.89Z"/><circle cx="16" cy="16" r="5.2" stroke-width="2.4"/></g></svg><div class="a" style="left:90.2px;top:1290.3px;width:30.4px;height:30.4px;background:#fff;border:1px solid #c6c6c6;border-radius:5px;"></div><div class="a" style="left:126.2px;top:1290.3px;width:30.4px;height:30.4px;background:#fff;border:1px solid #c6c6c6;border-radius:5px;"></div><svg class="a" style="left:95px;top:1296px;" width="22" height="20" viewBox="0 0 22 20"><path d="M18.8 9.7 H2.6 M9.6 2.4 L2.4 9.7 L9.6 17" fill="none" stroke="#111" stroke-width="1.9"/></svg><svg class="a" style="left:130.5px;top:1296px;" width="22" height="20" viewBox="0 0 22 20"><path d="M2.6 9.7 H18.8 M11.8 2.4 L19 9.7 L11.8 17" fill="none" stroke="#111" stroke-width="1.9"/></svg><div class="a" style="left:167px;top:1291.3px;width:2301px;height:29.4px;background:#fff;border:1px solid #ababab;"></div><div class="t" style="left:173.44px;top:1294.12px;font-size:19px;color:#7a7a7a;font-family:'Liberation Sans',sans-serif;letter-spacing:-0.461px;">Search</div><svg class="a" style="left:2440px;top:1295px;" width="22" height="22" viewBox="0 0 22 22"><g fill="none" stroke="#555" stroke-width="1.8" stroke-linecap="round"><circle cx="12.6" cy="8.3" r="5.8"/><path d="M8.4 12.5 L2.2 18.6"/></g></svg><div class="t" style="left:2490.26px;top:1296.02px;font-size:19px;color:#111;font-family:'Liberation Sans',sans-serif;font-family:'Liberation Serif',serif;">0</div><svg class="a" role="img" aria-label="高亮" style="left:2501.31px;top:1297.27px" width="36.40" height="18.4" viewBox="0 0 1978 1000" fill="#111"><text class="cj" x="0" y="880" textLength="1978" lengthAdjust="spacing">高亮</text></svg><svg class="a" role="img" aria-label="已暂停" style="left:17.21px;top:1330.97px" width="54.40" height="18.4" viewBox="0 0 2957 1000" fill="#111"><text class="cj" x="0" y="880" textLength="2957" lengthAdjust="spacing">已暂停</text></svg><div class="a" style="left:79.8px;top:1335.1px;width:2463.6px;height:9.9px;background:#dfdfdf;border-radius:5px;"></div><div class="a" style="left:79.8px;top:1335.1px;width:25.2px;height:9.9px;background:#5b4ff5;border-radius:5px;"></div>
</div></div>
<div class="a" style="left:2549px;top:146px;width:1px;height:26px;background:#bf6b52"></div>
</body></html>
